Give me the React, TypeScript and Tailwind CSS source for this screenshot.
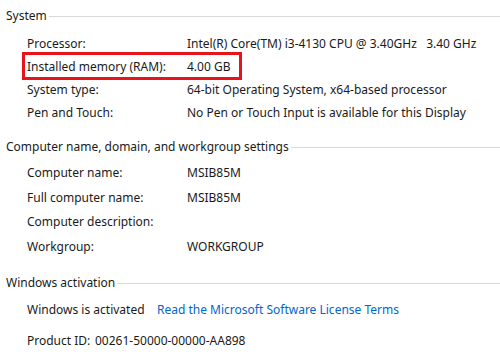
import React from "react";

const font = { fontFamily: '"Noto Sans", "Open Sans", sans-serif' };

function Header({ title, className = "" }: { title: string; className?: string }) {
  return (
    <div className={`flex h-[20px] items-center pl-[6px] ${className}`}>
      <span className="whitespace-nowrap pr-[2px] text-[12px] text-[#1a1a1a]">{title}</span>
      <div className="h-px flex-1 bg-[#d9d9d9]" />
    </div>
  );
}

function Row({ label, value, h = "h-[23px]" }: { label: string; value?: string; h?: string }) {
  return (
    <div className={`flex ${h} items-center pl-[27px] text-[12px] text-[#1a1a1a]`}>
      <span className="w-[160px] whitespace-nowrap">{label}</span>
      {value && <span className="whitespace-pre">{value}</span>}
    </div>
  );
}

export default function App() {
  return (
    <div className="h-[360px] w-[500px] overflow-hidden bg-white" style={font}>
      <Header title="System" className="mt-[6px]" />
      <div className="mt-[6px]">
        <Row label="Processor:" value="Intel(R) Core(TM) i3-4130 CPU @ 3.40GHz   3.40 GHz" />
        <div className="relative">
          <Row label="Installed memory (RAM):" value="4.00 GB" />
          <span className="pointer-events-none absolute left-[22px] top-[-3px] h-[28px] w-[220px] border-[3px] border-[#e8141b]" />
        </div>
        <Row label="System type:" value="64-bit Operating System, x64-based processor" />
        <Row label="Pen and Touch:" value="No Pen or Touch Input is available for this Display" />
      </div>

      <Header title="Computer name, domain, and workgroup settings" className="mt-[13px]" />
      <div className="mt-[4px]">
        <Row label="Computer name:" value="MSIB85M" h="h-[24.5px]" />
        <Row label="Full computer name:" value="MSIB85M" h="h-[24.5px]" />
        <Row label="Computer description:" h="h-[24.5px]" />
        <Row label="Workgroup:" value="WORKGROUP" h="h-[24.5px]" />
      </div>

      <Header title="Windows activation" className="mt-[14px]" />
      <div className="mt-[5px] flex h-[24px] items-center pl-[27px] text-[12px] text-[#1a1a1a]">
        <span className="w-[130px] whitespace-nowrap">Windows is activated</span>
        <span className="whitespace-nowrap text-[#0066cc]">Read the Microsoft Software License Terms</span>
      </div>
      <div className="mt-[7px] flex h-[24px] items-center pl-[27px] text-[12px] text-[#1a1a1a]">
        <span className="w-[68px] whitespace-nowrap">Product ID:</span>
        <span className="whitespace-nowrap">00261-50000-00000-AA898</span>
      </div>
    </div>
  );
}
